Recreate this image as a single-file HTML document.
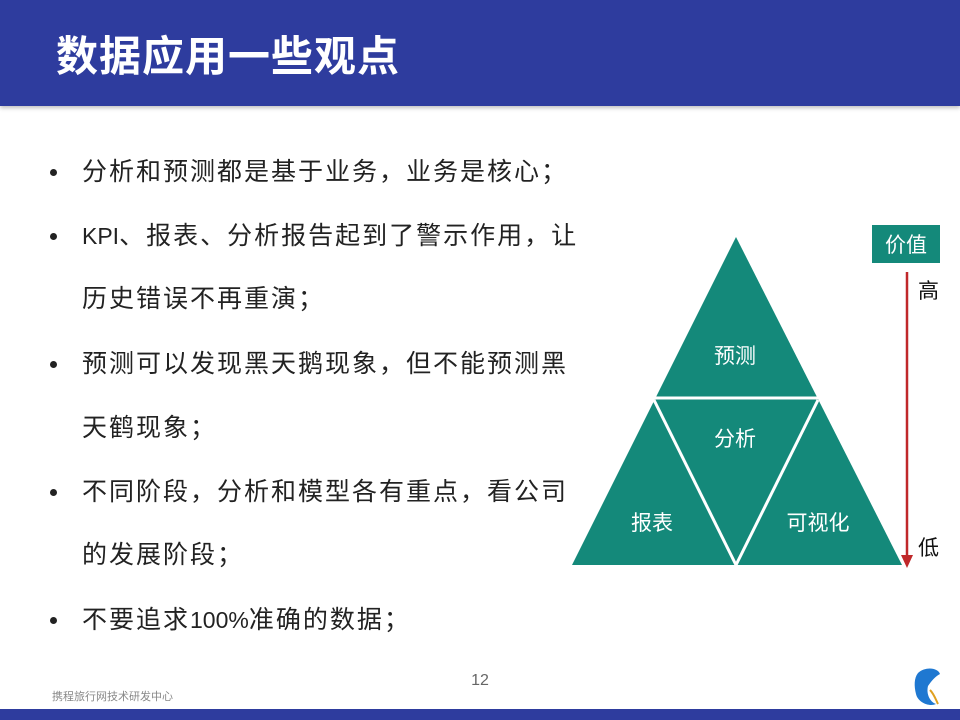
<!DOCTYPE html>
<html><head><meta charset="utf-8"><style>
body{margin:0;width:960px;height:720px;position:relative;background:#fff;overflow:hidden;font-family:"Liberation Sans","Noto Sans CJK SC",sans-serif;}
.hdr{position:absolute;left:0;top:0;width:960px;height:106px;background:#2E3C9E;box-shadow:0 2px 4px rgba(0,0,0,.25);}
.hdr h1{position:absolute;left:56px;top:32px;margin:0;font-size:42px;font-weight:bold;color:#fff;letter-spacing:1px;line-height:50px;}
.ln{position:absolute;left:82px;font-size:25px;color:#222;letter-spacing:2px;white-space:nowrap;line-height:30px;}
.l{letter-spacing:0;font-size:23px}
.b{position:absolute;left:50px;width:7px;height:7px;border-radius:50%;background:#222;}
.foot{position:absolute;left:0;top:709px;width:960px;height:11px;background:#2E3C9E;}
</style></head><body>
<div class="hdr"><h1>数据应用一些观点</h1></div>
<div class="b" style="top:169px"></div><div class="ln" style="top:157px">分析和预测都是基于业务，业务是核心；</div>
<div class="b" style="top:233px"></div><div class="ln" style="top:221px"><span class="l">KPI</span>、报表、分析报告起到了警示作用，让</div>
<div class="ln" style="top:284px">历史错误不再重演；</div>
<div class="b" style="top:361px"></div><div class="ln" style="top:349px">预测可以发现黑天鹅现象，但不能预测黑</div>
<div class="ln" style="top:413px">天鹤现象；</div>
<div class="b" style="top:489px"></div><div class="ln" style="top:477px">不同阶段，分析和模型各有重点，看公司</div>
<div class="ln" style="top:540px">的发展阶段；</div>
<div class="b" style="top:617px"></div><div class="ln" style="top:605px">不要追求<span class="l">100%</span>准确的数据；</div>
<svg style="position:absolute;left:0;top:0" width="960" height="720">
<polygon points="736,237 572,565 902,565" fill="#14897A"/>
<line x1="650" y1="398" x2="822" y2="398" stroke="#fff" stroke-width="3"/>
<line x1="654" y1="400" x2="736" y2="565" stroke="#fff" stroke-width="3"/>
<line x1="818" y1="400" x2="736" y2="565" stroke="#fff" stroke-width="3"/>
<g fill="#fff" font-size="21" text-anchor="middle" font-family="Liberation Sans,Noto Sans CJK SC,sans-serif">
<text x="735" y="363">预测</text><text x="735" y="446">分析</text>
<text x="652" y="530">报表</text><text x="818" y="530">可视化</text></g>
<rect x="872" y="225" width="68" height="38" fill="#14897A"/>
<text x="906" y="252" fill="#fff" font-size="21" text-anchor="middle" font-family="Liberation Sans,Noto Sans CJK SC,sans-serif">价值</text>
<line x1="907" y1="272" x2="907" y2="558" stroke="#C0282A" stroke-width="2.5"/>
<polygon points="901,555 913,555 907,568" fill="#C0282A"/>
<g fill="#111" font-size="21" font-family="Liberation Sans,Noto Sans CJK SC,sans-serif">
<text x="918" y="298">高</text><text x="918" y="555">低</text></g>
<text x="480" y="685" fill="#666" font-size="16" text-anchor="middle" font-family="Liberation Sans,sans-serif">12</text>
<text x="52" y="700" fill="#888" font-size="11" font-family="Liberation Sans,Noto Sans CJK SC,sans-serif">携程旅行网技术研发中心</text>
<path d="M918,673 C926,666 938,668 940,674 C936,676 932,680 928,686 C926,694 930,702 936,704 C930,707 918,703 916,694 C914,686 914,678 918,673Z" fill="#1F78D1"/>
<path d="M930,690 C934,694 936,700 938,704" stroke="#E0A020" stroke-width="2" fill="none"/>
</svg>
<div class="foot"></div>
</body></html>
